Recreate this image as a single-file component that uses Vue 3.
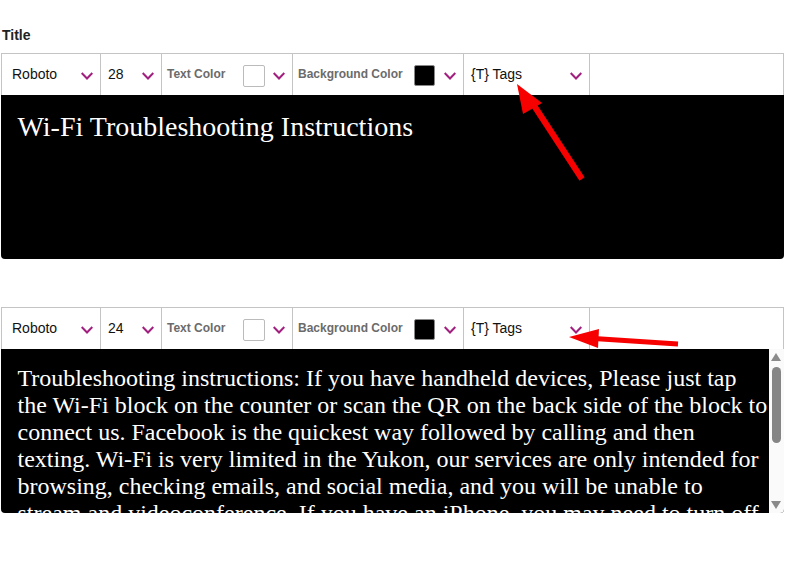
<script setup>
const editors = [
  {
    size: '28', big: true,
    text: 'Wi-Fi Troubleshooting Instructions',
  },
  {
    size: '24', big: false,
    text: 'Troubleshooting instructions: If you have handheld devices, Please just tap the Wi-Fi block on the counter or scan the QR on the back side of the block to connect us. Facebook is the quickest way followed by calling and then texting. Wi-Fi is very limited in the Yukon, our services are only intended for browsing, checking emails, and social media, and you will be unable to stream and videoconference. If you have an iPhone, you may need to turn off private relay in order to connect to the network successfully.',
  },
]
</script>

<template>
  <div class="page">
    <div class="title">Title</div>
    <section v-for="e in editors" :key="e.size" class="editor" :class="{ second: !e.big }">
      <div class="toolbar">
        <div class="cell font"><span class="val">Roboto</span><svg class="chev" viewBox="0 0 12 8"><path d="M.7 1 6 6.500 11.300 1" /></svg></div>
        <div class="cell size"><span class="val">{{ e.size }}</span><svg class="chev" viewBox="0 0 12 8"><path d="M.7 1 6 6.500 11.300 1" /></svg></div>
        <div class="cell tcolor"><span class="label">Text Color</span><span class="swatch white"></span><svg class="chev" viewBox="0 0 12 8"><path d="M.7 1 6 6.500 11.300 1" /></svg></div>
        <div class="cell bcolor"><span class="label">Background Color</span><span class="swatch black"></span><svg class="chev" viewBox="0 0 12 8"><path d="M.7 1 6 6.500 11.300 1" /></svg></div>
        <div class="cell tags"><span class="val">{T} Tags</span><svg class="chev" viewBox="0 0 12 8"><path d="M.7 1 6 6.500 11.300 1" /></svg></div>
      </div>
      <div class="body" :class="{ big: e.big }">
        <div class="content" :class="{ small: !e.big }">{{ e.text }}</div>
        <div v-if="!e.big" class="scrollbar">
          <span class="up"></span>
          <span class="thumb"></span>
          <span class="down"></span>
        </div>
      </div>
      <svg v-if="e.big" class="arrow a1" width="80" height="100" viewBox="0 0 80 100">
        <path d="M68 96 17 18" stroke="#f60000" stroke-width="6" fill="none" />
        <path d="M3 1 28 20 9 31Z" fill="#f60000" />
      </svg>
      <svg v-else class="arrow a2" width="115" height="30" viewBox="0 0 115 30">
        <path d="M112 19 28 13.500" stroke="#f60000" stroke-width="5" fill="none" />
        <path d="M3 12 33 4 32 23Z" fill="#f60000" />
      </svg>
    </section>
  </div>
</template>

<style scoped>
.page {
  width: 795px;
  height: 583px;
  box-sizing: border-box;
  padding: 28px 11px 0 1px;
  font-family: "Liberation Sans", Arial, sans-serif;
  background: #fff;
  overflow: hidden;
}
.title {
  height: 25px;
  padding-left: 1px;
  font-size: 14px;
  line-height: 15px;
  font-weight: 700;
  color: #222;
}
.editor {
  position: relative;
  width: 783px;
}
.editor.second {
  margin-top: 48px;
}
.toolbar {
  display: flex;
  height: 42px;
  box-sizing: border-box;
  border: 1px solid #c4c4c4;
  border-bottom: 0;
}
.cell {
  display: flex;
  align-items: center;
  height: 100%;
  box-sizing: border-box;
  border-right: 1px solid #c4c4c4;
  position: relative;
}
.font { width: 99px; padding-left: 10px; }
.size { width: 61px; padding-left: 7px; }
.tcolor { width: 131px; padding-left: 5px; }
.bcolor { width: 171px; padding-left: 5px; }
.tags { width: 126px; padding-left: 7px; }
.val {
  font-size: 14px;
  line-height: 16px;
  color: #111;
  margin-top: -1px;
}
.label {
  font-size: 12px;
  line-height: 14px;
  font-weight: 700;
  color: #6b6b6b;
  margin-top: -1px;
}
.chev {
  position: absolute;
  right: 7px;
  top: 18px;
  width: 12px;
  height: 8px;
  fill: none;
  stroke: #a11f7e;
  stroke-width: 2;
}
.swatch {
  position: absolute;
  top: 11px;
  width: 21px;
  height: 21px;
  border-radius: 2px;
  box-sizing: border-box;
  border: 1px solid #bbb;
}
.tcolor .swatch { left: 81px; width: 22px; height: 22px; }
.bcolor .swatch { left: 121px; }
.swatch.white { background: #fff; }
.swatch.black { background: #000; border-color: #888; }
.body {
  display: flex;
  height: 164px;
  background: #000;
  border-radius: 0 0 4px 4px;
  overflow: hidden;
}
.content {
  flex: 1;
  box-sizing: border-box;
  padding: 16px 0 0 16.500px;
  color: #fff;
  font-family: "Liberation Serif", "Times New Roman", serif;
  font-size: 28px;
  line-height: 32px;
}
.content.small {
  padding-top: 16px;
  font-size: 24px;
  line-height: 27px;
  overflow: hidden;
}
.scrollbar {
  flex: 0 0 15px;
  width: 15px;
  background: #fafafa;
  position: relative;
}
.thumb {
  position: absolute;
  left: 3px;
  top: 18px;
  width: 9px;
  height: 76px;
  border-radius: 5px;
  background: #858585;
}
.up, .down {
  position: absolute;
  left: 2px;
  width: 0;
  height: 0;
  border-left: 5px solid transparent;
  border-right: 5px solid transparent;
}
.up {
  top: 4px;
  border-bottom: 8px solid #8a8a8a;
}
.down {
  bottom: 4px;
  border-top: 8px solid #8a8a8a;
}
.arrow {
  position: absolute;
}
.a1 { left: 513px; top: 30px; }
.a2 { left: 565px; top: 18px; }
</style>
